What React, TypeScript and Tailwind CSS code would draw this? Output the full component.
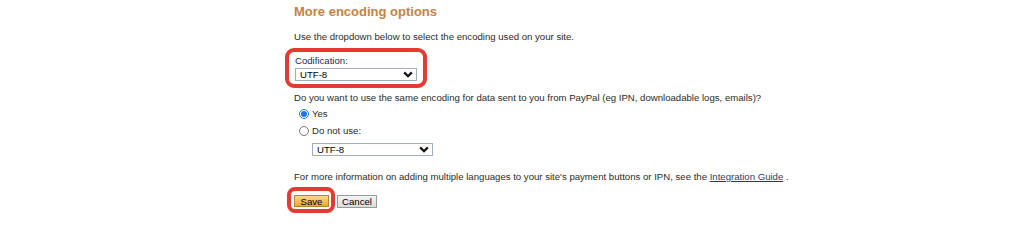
import { useState } from 'react';

function Chevron() {
  return (
    <svg width="10" height="7" viewBox="0 0 10 7" className="pointer-events-none absolute right-[4px] top-[3px]">
      <path d="M1.2 1.4 L5 5.2 L8.8 1.4" fill="none" stroke="#111" strokeWidth="2.2" />
    </svg>
  );
}

function EncodingSelect({ width }: { width: string }) {
  return (
    <div className={`relative h-[13px] ${width}`}>
      <select
        defaultValue="utf8"
        className="block h-[13px] w-full appearance-none rounded-none border border-[#a3adbd] bg-white pl-[4px] text-[9.6px] leading-[11px] text-black outline-none"
      >
        <option value="utf8">UTF-8</option>
        <option value="latin1">ISO-8859-1</option>
        <option value="win1252">windows-1252</option>
      </select>
      <Chevron />
    </div>
  );
}

export default function App() {
  const [same, setSame] = useState('yes');

  return (
    <div className="h-[231px] w-[1020px] bg-white pl-[294px] font-['Liberation_Sans',Arial,sans-serif] text-[9.6px] text-[#2b2b2b]">
      <h2 className="pt-[4px] text-[13px] font-bold leading-[16px] text-[#c98140]">More encoding options</h2>

      <p className="mt-[11px] leading-[12px]">Use the dropdown below to select the encoding used on your site.</p>

      <div className="ml-[-9px] mt-[5px] w-[142px] rounded-[9px] border-4 border-[#e53a2f] pb-[3px] pl-[6px] pr-[6px] pt-[3px]">
        <label className="block leading-[12px] text-[#1d2a55]">Codification:</label>
        <div className="mt-[1px]">
          <EncodingSelect width="w-[122px]" />
        </div>
      </div>

      <p className="mt-[4px] leading-[12px]">
        Do you want to use the same encoding for data sent to you from PayPal (eg IPN, downloadable logs, emails)?
      </p>

      <div className="mt-[4px] flex flex-col gap-[5px] pl-[5px]">
        <label className="flex h-[12px] items-center gap-[3px] leading-[12px]">
          <input
            type="radio"
            name="same"
            checked={same === 'yes'}
            onChange={() => setSame('yes')}
            className="m-0 h-[10px] w-[10px] accent-[#1a73e8]"
          />
          Yes
        </label>
        <label className="flex h-[12px] items-center gap-[3px] leading-[12px]">
          <input
            type="radio"
            name="same"
            checked={same === 'no'}
            onChange={() => setSame('no')}
            className="m-0 h-[10px] w-[10px] accent-[#1a73e8]"
          />
          Do not use:
        </label>
      </div>

      <div className="ml-[18px] mt-[6px]">
        <EncodingSelect width="w-[121px]" />
      </div>

      <p className="mt-[15px] leading-[12px]">
        For more information on adding multiple languages to your site's payment buttons or IPN, see the{' '}
        <a href="#" className="text-[#1b3f73] underline">Integration Guide</a> .
      </p>

      <div className="mt-[4px] flex items-center gap-[2px]">
        <div className="ml-[-7px] rounded-[8px] border-4 border-[#e53a2f] pb-[2px] pl-[3px] pr-[2px] pt-[4px]">
          <button className="block h-[12px] w-[35px] border border-[#b8832f] bg-gradient-to-b from-[#ffd88a] to-[#f6a421] pt-[1px] text-[9.6px] leading-[10px] text-black">
            Save
          </button>
        </div>
        <button className="mt-[2px] h-[13px] w-[40px] border border-[#9a9a9a] bg-gradient-to-b from-[#f4f4f4] to-[#dcdcdc] text-[9.6px] leading-[11px] text-black">
          Cancel
        </button>
      </div>
    </div>
  );
}
